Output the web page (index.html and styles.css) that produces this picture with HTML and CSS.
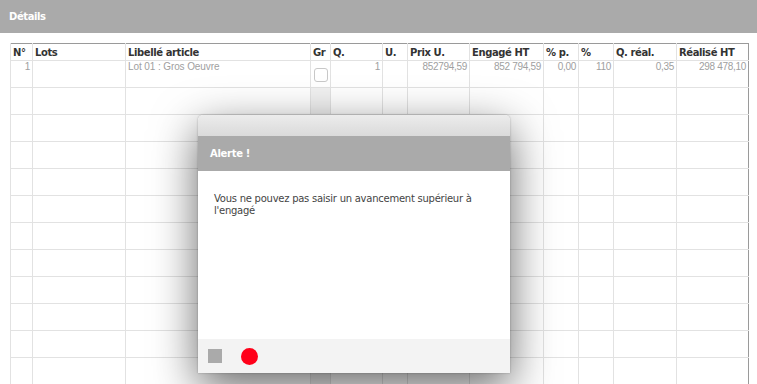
FILE: index.html
```html
<!DOCTYPE html>
<html lang="fr">
<head>
<meta charset="utf-8">
<title>Détails</title>
<link rel="stylesheet" href="styles.css">
</head>
<body>
<div class="topbar">Détails</div>
<div class="grid-wrap">
<table class="grid">
<colgroup>
<col class="c-no"><col class="c-lots"><col class="c-lib"><col class="c-gr"><col class="c-q"><col class="c-u"><col class="c-prix"><col class="c-eng"><col class="c-pp"><col class="c-pc"><col class="c-qr"><col class="c-real">
</colgroup>
<thead>
<tr><th>N°</th><th>Lots</th><th>Libellé article</th><th>Gr</th><th>Q.</th><th>U.</th><th>Prix U.</th><th>Engagé HT</th><th>% p.</th><th>%</th><th>Q. réal.</th><th>Réalisé HT</th></tr>
</thead>
<tbody>
<tr><td class="num">1</td><td></td><td>Lot 01 : Gros Oeuvre</td><td class="gr"><span class="check"></span></td><td class="num">1</td><td></td><td class="num">852794,59</td><td class="num">852 794,59</td><td class="num">0,00</td><td class="num">110</td><td class="num">0,35</td><td class="num">298 478,10</td></tr>
<tr class="empty"><td></td><td></td><td></td><td class="gr"></td><td></td><td></td><td></td><td></td><td></td><td></td><td></td><td></td></tr>
<tr class="empty"><td></td><td></td><td></td><td class="gr"></td><td></td><td></td><td></td><td></td><td></td><td></td><td></td><td></td></tr>
<tr class="empty"><td></td><td></td><td></td><td class="gr"></td><td></td><td></td><td></td><td></td><td></td><td></td><td></td><td></td></tr>
<tr class="empty"><td></td><td></td><td></td><td class="gr"></td><td></td><td></td><td></td><td></td><td></td><td></td><td></td><td></td></tr>
<tr class="empty"><td></td><td></td><td></td><td class="gr"></td><td></td><td></td><td></td><td></td><td></td><td></td><td></td><td></td></tr>
<tr class="empty"><td></td><td></td><td></td><td class="gr"></td><td></td><td></td><td></td><td></td><td></td><td></td><td></td><td></td></tr>
<tr class="empty"><td></td><td></td><td></td><td class="gr"></td><td></td><td></td><td></td><td></td><td></td><td></td><td></td><td></td></tr>
<tr class="empty"><td></td><td></td><td></td><td class="gr"></td><td></td><td></td><td></td><td></td><td></td><td></td><td></td><td></td></tr>
<tr class="empty"><td></td><td></td><td></td><td class="gr"></td><td></td><td></td><td></td><td></td><td></td><td></td><td></td><td></td></tr>
<tr class="empty"><td></td><td></td><td></td><td class="gr"></td><td></td><td></td><td></td><td></td><td></td><td></td><td></td><td></td></tr>
<tr class="empty"><td></td><td></td><td></td><td class="gr"></td><td></td><td></td><td></td><td></td><td></td><td></td><td></td><td></td></tr>
</tbody>
</table>
</div>

<div class="dialog">
  <div class="dlg-titlebar"></div>
  <div class="dlg-head">Alerte !</div>
  <div class="dlg-body">Vous ne pouvez pas saisir un avancement supérieur à l'engagé</div>
  <div class="dlg-foot">
    <span class="btn-square"></span>
    <span class="btn-dot"></span>
  </div>
</div>
</body>
</html>
```
FILE: styles.css
```css
html, body {
  margin: 0;
  padding: 0;
  background: #fff;
  font-family: "DejaVu Sans", Verdana, sans-serif;
  overflow: hidden;
  height: 384px;
}
.topbar {
  height: 33px;
  background: #aaaaaa;
  color: #fff;
  font-weight: bold;
  font-size: 10px;
  line-height: 33px;
  padding-left: 9px;
  letter-spacing: -0.4px;
}
.grid-wrap {
  padding: 10px 0 0 10px;
}
.grid {
  border-collapse: collapse;
  table-layout: fixed;
  width: 739px;
  border-top: 1px solid #9a9a9a;
  border-left: 1px solid #9a9a9a;
  border-right: 1px solid #9a9a9a;
  font-size: 10px;
}
.c-no { width: 22px; }
.c-lots { width: 93px; }
.c-lib { width: 185px; }
.c-gr { width: 20px; }
.c-q { width: 52px; }
.c-u { width: 25px; }
.c-prix { width: 62px; }
.c-eng { width: 74px; }
.c-pp { width: 35px; }
.c-pc { width: 35px; }
.c-qr { width: 63px; }
.c-real { width: 72px; }
.grid th {
  height: 16px;
  padding: 0 2px;
  text-align: left;
  font-weight: bold;
  color: #333;
  border-left: 1px solid #e2e2e2;
  border-bottom: 1px solid #e2e2e2;
  white-space: nowrap;
  overflow: hidden;
  letter-spacing: -0.4px;
}
.grid td {
  height: 26px;
  padding: 0 2px;
  vertical-align: top;
  color: #a0a0a0;
  font-family: "Liberation Sans", Arial, sans-serif;
  font-size: 10px;
  letter-spacing: -0.1px;
  border-left: 1px solid #e2e2e2;
  border-bottom: 1px solid #e2e2e2;
  white-space: nowrap;
  overflow: hidden;
  line-height: 12px;
}
.grid td.num { text-align: right; letter-spacing: -0.3px; }
.grid tr.empty td.gr { background: #f1f1f1; }
.check {
  display: block;
  margin-top: 7px;
  margin-left: 1px;
  width: 12px;
  height: 12px;
  border: 1px solid #c8c8c8;
  border-radius: 3px;
  background: #fff;
}

.dialog {
  position: absolute;
  left: 198px;
  top: 115px;
  width: 312px;
  height: 258px;
  display: flex;
  flex-direction: column;
  border-radius: 5px 5px 0 0;
  box-shadow: 0 14px 45px rgba(0,0,0,0.6), 0 0 2px rgba(0,0,0,0.3);
  background: #fff;
  font-family: "DejaVu Sans", Verdana, sans-serif;
}
.dlg-titlebar {
  height: 21px;
  border-radius: 5px 5px 0 0;
  background: linear-gradient(#ececec, #dadada);
}
.dlg-head {
  height: 35px;
  background: #aaaaaa;
  color: #fff;
  font-weight: bold;
  font-size: 10px;
  line-height: 35px;
  padding-left: 12px;
  letter-spacing: -0.3px;
}
.dlg-body {
  flex: 1;
  padding: 22px 16px 0 16px;
  font-size: 10px;
  line-height: 12px;
  color: #444;
  letter-spacing: -0.25px;
}
.dlg-foot {
  height: 34px;
  background: #f3f3f3;
  display: flex;
  align-items: center;
  padding-left: 10px;
  gap: 19px;
}
.btn-square {
  width: 14px;
  height: 14px;
  background: #aaaaaa;
}
.btn-dot {
  width: 17px;
  height: 17px;
  border-radius: 50%;
  background: #ff0019;
}
```
